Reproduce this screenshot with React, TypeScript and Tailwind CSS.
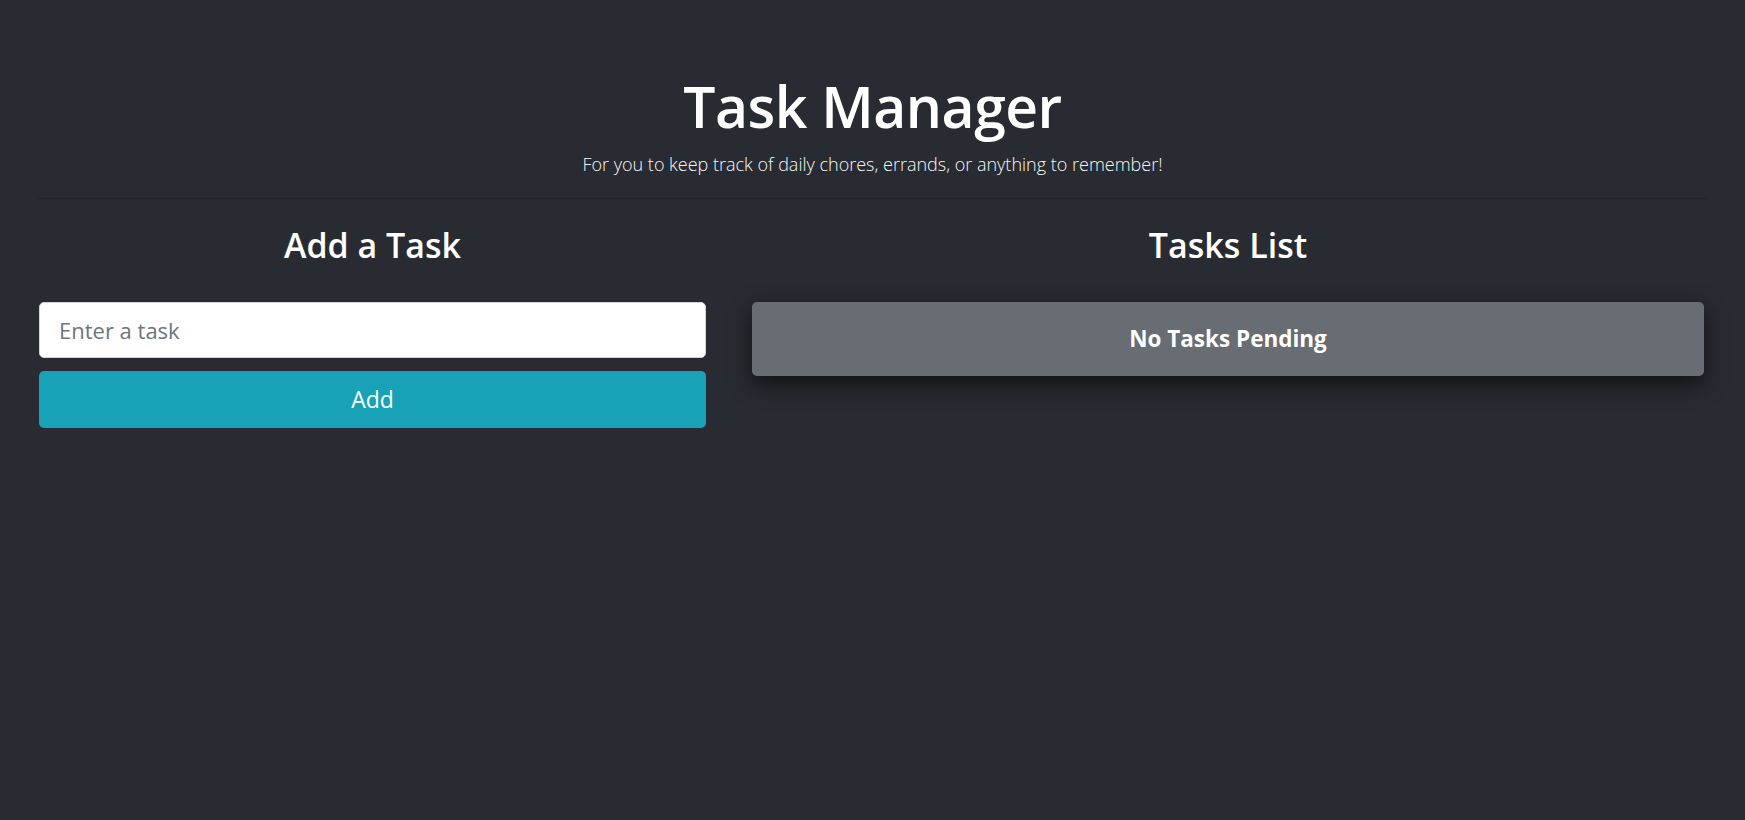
import React from "react";

export default function App() {
  return (
    <div className="min-h-screen bg-[#282b31] text-white font-['Open_Sans','Noto_Sans',sans-serif]">
      <header className="pt-[70px] flex flex-col items-center">
        <h1 className="text-[57px] leading-[72px] font-semibold tracking-[-0.5px]">Task Manager</h1>
        <p className="mt-[9px] text-[18px] leading-[26px] font-light text-[#f7f7f7]">
          For you to keep track of daily chores, errands, or anything to remember!
        </p>
      </header>
      <div className="mx-[38px] mt-[21px] h-px bg-[#212428]" />
      <main className="flex gap-[46px] pl-[39px] pr-[41px]">
        <section className="w-[667px] flex flex-col">
          <h2 className="mt-[23px] text-center text-[34px] leading-[46px] font-semibold">Add a Task</h2>
          <input
            type="text"
            placeholder="Enter a task"
            className="mt-[34px] h-[56px] w-full rounded-[5px] border border-[#ced4da] bg-white px-[19px] text-[22px] text-[#495057] placeholder:text-[#6c757d] outline-none"
          />
          <button className="mt-[13px] h-[57px] w-full rounded-[5px] bg-[#17a2b8] text-[23px] text-white">Add</button>
        </section>
        <section className="flex-1 flex flex-col">
          <h2 className="mt-[23px] text-center text-[34px] leading-[46px] font-semibold">Tasks List</h2>
          <div className="mt-[34px] h-[74px] rounded-[5px] bg-[#686c73] flex items-center justify-center shadow-[0_8px_22px_rgba(0,0,0,0.6)]">
            <span className="text-[22.5px] font-bold">No Tasks Pending</span>
          </div>
        </section>
      </main>
    </div>
  );
}
